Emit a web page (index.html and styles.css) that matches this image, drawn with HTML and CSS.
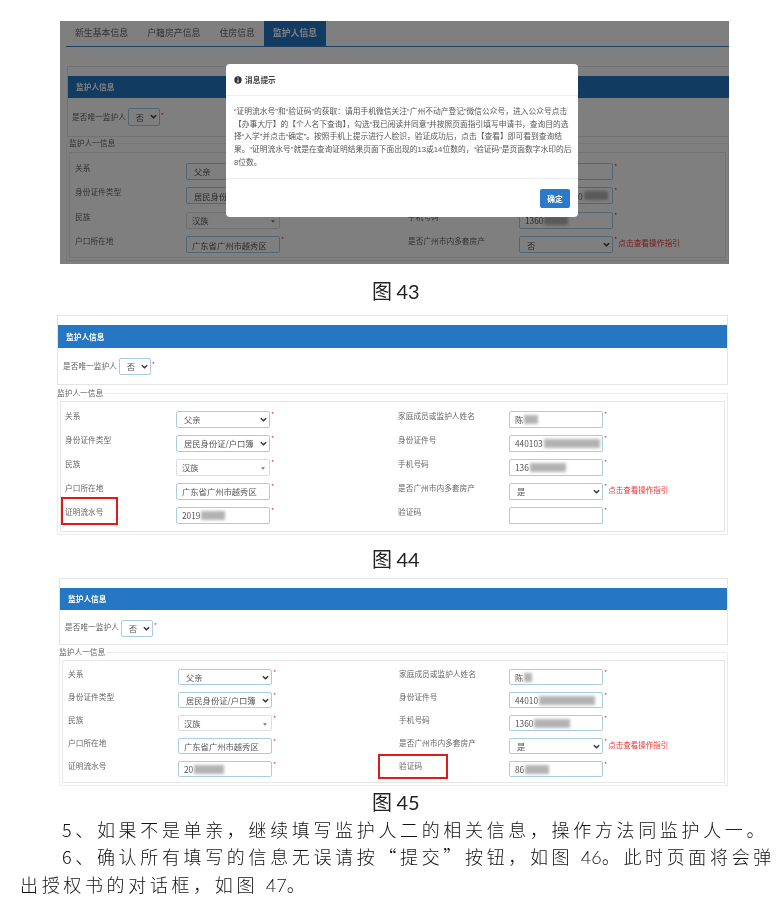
FILE: index.html
```html
<!DOCTYPE html>
<html lang="zh-CN">
<head>
<meta charset="utf-8">
<title>监护人信息</title>
<link rel="stylesheet" href="styles.css">
</head>
<body>
<main class="page">

<section class="shot shot-43">
  <nav class="tabs">
    <span class="tab">新生基本信息</span>
    <span class="tab">户籍房产信息</span>
    <span class="tab">住房信息</span>
    <span class="tab tab-active">监护人信息</span>
  </nav>
  <div class="panel">
    <h3 class="panel-title">监护人信息</h3>
    <div class="only-row"><span>是否唯一监护人</span><span class="ctl ctl-short">否<svg class="chev" viewBox="0 0 8 5"><path d="M1 1l3 3 3-3"/></svg></span><i class="star">*</i></div>
  </div>
  <fieldset class="group">
    <legend>监护人一信息</legend>
    <div class="form">
      <span class="lab">关系</span><span class="ctl">父亲<svg class="chev" viewBox="0 0 8 5"><path d="M1 1l3 3 3-3"/></svg></span><i class="star">*</i>
      <span class="lab">家庭成员或监护人姓名</span><span class="ctl">陈</span><i class="star">*</i>
      <span class="lab">身份证件类型</span><span class="ctl">居民身份证/户口簿<svg class="chev" viewBox="0 0 8 5"><path d="M1 1l3 3 3-3"/></svg></span><i class="star">*</i>
      <span class="lab">身份证件号</span><span class="ctl ctl-tail">0<b class="smudge s-24"></b></span><i class="star">*</i>
      <span class="lab">民族</span><span class="ctl ctl-gray ctl-tight">汉族<svg class="tri" viewBox="0 0 6 4"><path d="M0 0h6L3 4z"/></svg></span><i class="star">*</i>
      <span class="lab">手机号码</span><span class="ctl ctl-tight">1360<b class="smudge s-24"></b></span><i class="star">*</i>
      <span class="lab">户口所在地</span><span class="ctl ctl-tight">广东省广州市越秀区</span><i class="star">*</i>
      <span class="lab">是否广州市内多套房产</span><span class="ctl">否<svg class="chev" viewBox="0 0 8 5"><path d="M1 1l3 3 3-3"/></svg></span><span class="note"><i class="star">*</i>点击查看操作指引</span>
    </div>
  </fieldset>
  <div class="dim"></div>
  <div class="modal">
    <header class="modal-head"><svg class="info" viewBox="0 0 10 10"><circle cx="5" cy="5" r="4.6"/><path d="M5 2v1.2M5 4.3V8"/></svg>消息提示</header>
    <p class="modal-body">“证明流水号”和“验证码”的获取：请用手机微信关注“广州不动产登记”微信公众号，进入公众号点击<br>【办事大厅】的【个人名下查询】，勾选“我已阅读并同意”并按照页面指引填写申请书，查询目的选<br>择“入学”并点击“确定”。按照手机上提示进行人脸识，验证成功后，点击【查看】即可看到查询结<br>果。“证明流水号”就是在查询证明结果页面下面出现的13或14位数的，“验证码”是页面数字水印的后<br>8位数。</p>
    <footer class="modal-foot"><span class="btn">确定</span></footer>
  </div>
</section>
<p class="cap cap-43">图 <span class="num">43</span></p>

<section class="shot shot-44">
  <div class="panel">
    <h3 class="panel-title">监护人信息</h3>
    <div class="only-row"><span>是否唯一监护人</span><span class="ctl ctl-short">否<svg class="chev" viewBox="0 0 8 5"><path d="M1 1l3 3 3-3"/></svg></span><i class="star">*</i></div>
  </div>
  <fieldset class="group">
    <legend>监护人一信息</legend>
    <div class="form">
      <span class="lab">关系</span><span class="ctl">父亲<svg class="chev" viewBox="0 0 8 5"><path d="M1 1l3 3 3-3"/></svg></span><i class="star">*</i>
      <span class="lab">家庭成员或监护人姓名</span><span class="ctl ctl-tight">陈<b class="smudge s-14"></b></span><i class="star">*</i>
      <span class="lab">身份证件类型</span><span class="ctl">居民身份证/户口簿<svg class="chev" viewBox="0 0 8 5"><path d="M1 1l3 3 3-3"/></svg></span><i class="star">*</i>
      <span class="lab">身份证件号</span><span class="ctl ctl-tight">440103<b class="smudge s-56"></b></span><i class="star">*</i>
      <span class="lab">民族</span><span class="ctl ctl-gray ctl-tight">汉族<svg class="tri" viewBox="0 0 6 4"><path d="M0 0h6L3 4z"/></svg></span><i class="star">*</i>
      <span class="lab">手机号码</span><span class="ctl ctl-tight">136<b class="smudge s-36"></b></span><i class="star">*</i>
      <span class="lab">户口所在地</span><span class="ctl ctl-tight">广东省广州市越秀区</span><i class="star">*</i>
      <span class="lab">是否广州市内多套房产</span><span class="ctl">是<svg class="chev" viewBox="0 0 8 5"><path d="M1 1l3 3 3-3"/></svg></span><span class="note"><i class="star">*</i>点击查看操作指引</span>
      <span class="lab lab-mark">证明流水号</span><span class="ctl ctl-tight">2019<b class="smudge s-24"></b></span><i class="star">*</i>
      <span class="lab">验证码</span><span class="ctl"></span><i class="star">*</i>
    </div>
  </fieldset>
</section>
<p class="cap cap-44">图 <span class="num">44</span></p>

<section class="shot shot-45">
  <div class="panel">
    <h3 class="panel-title">监护人信息</h3>
    <div class="only-row"><span>是否唯一监护人</span><span class="ctl ctl-short">否<svg class="chev" viewBox="0 0 8 5"><path d="M1 1l3 3 3-3"/></svg></span><i class="star">*</i></div>
  </div>
  <fieldset class="group">
    <legend>监护人一信息</legend>
    <div class="form">
      <span class="lab">关系</span><span class="ctl">父亲<svg class="chev" viewBox="0 0 8 5"><path d="M1 1l3 3 3-3"/></svg></span><i class="star">*</i>
      <span class="lab">家庭成员或监护人姓名</span><span class="ctl ctl-tight">陈 <b class="smudge s-8"></b></span><i class="star">*</i>
      <span class="lab">身份证件类型</span><span class="ctl">居民身份证/户口簿<svg class="chev" viewBox="0 0 8 5"><path d="M1 1l3 3 3-3"/></svg></span><i class="star">*</i>
      <span class="lab">身份证件号</span><span class="ctl ctl-tight">44010<b class="smudge s-56"></b></span><i class="star">*</i>
      <span class="lab">民族</span><span class="ctl ctl-gray ctl-tight">汉族<svg class="tri" viewBox="0 0 6 4"><path d="M0 0h6L3 4z"/></svg></span><i class="star">*</i>
      <span class="lab">手机号码</span><span class="ctl ctl-tight">1360<b class="smudge s-36"></b></span><i class="star">*</i>
      <span class="lab">户口所在地</span><span class="ctl ctl-tight">广东省广州市越秀区</span><i class="star">*</i>
      <span class="lab">是否广州市内多套房产</span><span class="ctl">是<svg class="chev" viewBox="0 0 8 5"><path d="M1 1l3 3 3-3"/></svg></span><span class="note"><i class="star">*</i>点击查看操作指引</span>
      <span class="lab">证明流水号</span><span class="ctl ctl-tight">20<b class="smudge s-30"></b></span><i class="star">*</i>
      <span class="lab lab-mark">验证码</span><span class="ctl ctl-tight">86<b class="smudge s-24"></b></span><i class="star">*</i>
    </div>
  </fieldset>
</section>
<p class="cap cap-45">图 <span class="num">45</span></p>

<div class="doc">
  <p>5、如果不是单亲，继续填写监护人二的相关信息，操作方法同监护人一。</p>
  <p>6、确认所有填写的信息无误请按“提交”按钮，如图 <span class="num">46</span>。此时页面将会弹<br>出授权书的对话框，如图 <span class="num">47</span>。</p>
</div>
</main>
</body>
</html>
```
FILE: styles.css
```css
* { box-sizing: border-box; }
html, body { margin: 0; background: #fff; }
body {
  font-family: "Noto Sans CJK SC", "Liberation Sans", sans-serif;
  width: 776px;
  height: 922px;
  overflow: hidden;
}
.page { padding-top: 21px; }

/* pasted screenshots */
.shot {
  position: relative;
  font-size: 7.7px;
  line-height: 1;
  color: #666;
  filter: blur(0.4px);
  background: #fff;
}
.shot-43 { margin-left: 60px; width: 669px; height: 243px; overflow: hidden; padding-left: 6px; }
.shot-44 { margin-left: 57px; width: 671px; }
.shot-45 { margin-left: 59px; width: 669px; }

.tabs {
  display: flex;
  height: 26px;
  border-bottom: 1px solid #3f7fc0;
  padding-left: 9px;
  font-size: 8.9px;
}
.tab { display: flex; align-items: center; margin-right: 19px; color: #666; }
.tab-active {
  background: #2576c3;
  color: #fff;
  font-weight: 700;
  width: 62px;
  justify-content: center;
  margin-left: -10px;
}

.panel {
  border: 1px solid #e4e4e4;
  padding-top: 9px;
  background: #fff;
}
.panel-title {
  margin: 0;
  height: 23px;
  padding-left: 8px;
  display: flex;
  align-items: center;
  background: #2576c3;
  color: #fff;
  font-size: 7.7px;
  font-weight: 700;
}
.only-row {
  height: 36px;
  display: flex;
  align-items: center;
  padding-left: 5px;
  gap: 2px;
}
.only-row .star { align-self: center; margin: -3px 0 0 -1px; }
.shot-43 .panel { margin: 19px 0 0 1px; padding-top: 9px; border-right: 0; }
.shot-43 .panel-title { height: 22px; }
.shot-43 .only-row { height: 38px; padding-left: 4px; }
.shot-43 .only-row .ctl { height: 18px; }

.ctl {
  display: flex;
  align-items: center;
  position: relative;
  height: 17px;
  width: 94px;
  padding-left: 7px;
  background: #fff;
  color: #555;
  font-size: 8.3px;
  border: 1px solid #a9cbe6;
  border-radius: 2px;
  white-space: nowrap;
}
.ctl-tight { padding-left: 5px; }
.ctl-tail { padding-left: 58px; }
.ctl-gray { border-color: #ddd; }
.ctl-short { width: 32px; }
.chev {
  position: absolute;
  right: 2px;
  top: 5px;
  width: 7px;
  height: 5px;
  fill: none;
  stroke: #333;
  stroke-width: 1.6;
}
.tri { position: absolute; right: 4px; top: 7px; width: 4px; height: 3px; fill: #777; }
.star { color: #e33; font-style: normal; font-size: 7px; align-self: start; margin-left: 1px; }

.group {
  margin: 0;
  padding: 0 2px 2px;
  border: 1px solid #ececec;
  min-width: 0;
}
.group legend {
  padding: 0 2px 0 0;
  margin-left: -3px;
  line-height: 8px;
}
.form {
  margin-top: 4px;
  border: 1px solid #e6e6e6;
  padding: 9px 4px 7px;
  display: grid;
  grid-template-columns: 111px 94px 128px 111px 94px 1fr;
  row-gap: 7px;
}
.lab { position: relative; padding-top: 1px; white-space: nowrap; }
.form .note { color: #e33; display: flex; gap: 1px; white-space: nowrap; padding-top: 3px; font-size: 7.5px; margin-left: 1px; }
.form .note .star { margin: -3px 0 0; }

.shot-43 .group { margin-top: 2px; }
.shot-43 .group legend { margin-left: 0; }
.shot-43 .form { margin-top: 5px; row-gap: 7.4px; padding: 10px 5px 4px 5px; }
.shot-43 .form .note { font-size: 7.7px; }
.shot-45 .group { margin-top: 3px; }
.shot-44 .group { margin-top: 4px; }
.shot-45 .panel { padding-top: 9px; }
.shot-45 .panel-title { height: 22px; }
.shot-45 .only-row { height: 34px; }
.shot-45 .only-row .ctl { position: relative; top: 1px; }
.shot-45 .form { row-gap: 7px; padding: 8px 4px 5px 5px; grid-template-columns: 110px 94px 127px 110px 94px 1fr; }
.shot-45 .ctl { height: 16px; }
.shot-45 .ctl-short { height: 17px; }

.lab-mark::after {
  content: "";
  position: absolute;
  border: 2px solid #e01a1a;
  left: -4px;
  top: -10px;
  width: 53px;
  height: 24px;
}
.shot-45 .lab-mark::after { left: -21px; top: -7px; width: 66px; height: 21px; }

.smudge {
  display: inline-block;
  height: 9px;
  margin-left: 1px;
  background: #b3b3b3;
  filter: blur(1.6px);
}
.s-8 { width: 8px; }
.s-14 { width: 14px; }
.s-24 { width: 24px; }
.s-30 { width: 30px; }
.s-36 { width: 36px; }
.s-56 { width: 56px; }

/* dialog over the first screenshot */
.dim { position: absolute; inset: 0; background: rgba(0, 0, 0, 0.5); }
.modal {
  position: absolute;
  left: 166px;
  top: 43px;
  width: 352px;
  height: 153px;
  background: #fff;
  border-radius: 4px;
  color: #555;
  display: flex;
  flex-direction: column;
}
.modal-head {
  height: 32px;
  display: flex;
  align-items: center;
  gap: 3px;
  padding-left: 8px;
  border-bottom: 1px solid #eee;
  font-size: 7.7px;
  font-weight: 700;
  color: #444;
}
.info { width: 8px; height: 8px; }
.info circle { fill: #333; }
.info path { stroke: #fff; stroke-width: 1.3; fill: none; }
.modal-body {
  margin: 0;
  padding: 10px 8px 0;
  height: 82px;
  font-family: "Liberation Sans", "Noto Sans CJK SC", sans-serif;
  font-size: 7.75px;
  line-height: 12.7px;
  white-space: nowrap;
}
.modal-foot {
  flex: 1;
  border-top: 1px solid #eee;
  display: flex;
  justify-content: flex-end;
  align-items: flex-start;
  padding: 10px 8px 0 0;
}
.btn {
  width: 30px;
  height: 19px;
  display: flex;
  align-items: center;
  justify-content: center;
  background: #2a7ac7;
  border-radius: 2px;
  color: #fff;
  font-size: 7.7px;
  font-weight: 700;
}

/* document text */
.num { font-family: "Lato", "Noto Sans CJK SC", sans-serif; letter-spacing: 0; }
.cap {
  margin: 0 0 0 372px;
  font-size: 20px;
  line-height: 24px;
  color: #222;
  filter: blur(0.25px);
}
.cap-43 { margin-top: 15px; margin-bottom: 12px; }
.cap-44 { margin-top: 12px; margin-bottom: 7px; }
.cap-45 { margin-top: 4px; margin-bottom: 2px; }

.doc {
  padding-left: 20px;
  width: 776px;
  font-size: 18px;
  font-weight: 300;
  line-height: 27px;
  letter-spacing: 3.65px;
  white-space: nowrap;
  color: #111;
  filter: blur(0.25px);
}
.doc p { margin: 0; text-indent: 42px; }
```
